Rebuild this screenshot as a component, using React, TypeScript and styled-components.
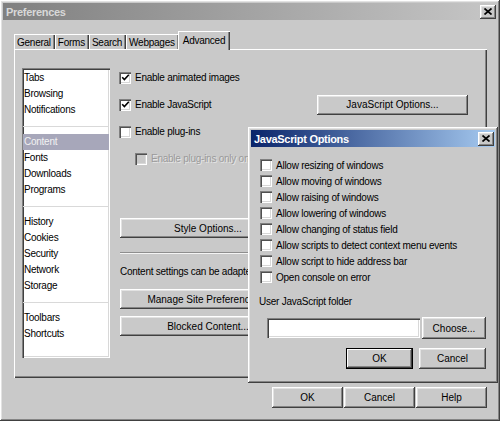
import styled, { createGlobalStyle, css } from 'styled-components'

const GlobalStyle = createGlobalStyle`
    html, body {
        margin: 0;
        padding: 0;
        background: #c9c9c9;
        overflow: hidden;
    }
    body {
        font-family: "Liberation Sans", Arial, sans-serif;
        font-size: 10px;
        letter-spacing: -0.25px;
        color: #000;
    }
    * {
        box-sizing: border-box;
    }
`

const raised = css`
    box-shadow: inset -1px -1px #404040, inset 1px 1px #ffffff,
        inset -2px -2px #858585, inset 2px 2px #e2e2e2;
`

const sunken = css`
    box-shadow: inset 1px 1px #808080, inset 2px 2px #404040,
        inset -1px -1px #ffffff, inset -2px -2px #d8d8d8;
`

const Window = styled.div`
    position: relative;
    display: flex;
    flex-direction: column;
    width: 500px;
    height: 421px;
    padding: 3px;
    background: #c9c9c9;
    ${raised}
`

const TitleBar = styled.div<{ $active?: boolean }>`
    display: flex;
    align-items: center;
    justify-content: space-between;
    height: 17px;
    padding: 0 1px 0 3px;
    background: ${(p) =>
        p.$active
            ? 'linear-gradient(to right, #0a246a, #a6caf0)'
            : 'linear-gradient(to right, #808080, #c6c6c6)'};
    color: ${(p) => (p.$active ? '#ffffff' : '#d8d8d8')};
    font-size: 11px;
    font-weight: bold;
    letter-spacing: -0.3px;
`

const CloseButton = styled.div`
    display: flex;
    align-items: center;
    justify-content: center;
    width: 16px;
    height: 14px;
    background: #c9c9c9;
    ${raised}
`

const Body = styled.div`
    display: flex;
    flex-direction: column;
    flex: 1;
    padding: 11px 10px 0 11px;
`

const TabStrip = styled.div`
    display: flex;
    align-items: flex-end;
    height: 18px;
`

const Tab = styled.div<{ $selected?: boolean }>`
    position: relative;
    display: flex;
    align-items: center;
    height: ${(p) => (p.$selected ? '19px' : '15px')};
    margin: ${(p) => (p.$selected ? '0 -1px -1px -1px' : '0')};
    padding: ${(p) => (p.$selected ? '0 5px 0 5px' : '1px 4px 0 3px')};
    background: #c9c9c9;
    z-index: ${(p) => (p.$selected ? 2 : 1)};
    box-shadow: inset 1px 1px #ffffff, inset -1px 0 #404040,
        inset -2px 0 #858585;
`

const Panel = styled.div`
    display: flex;
    gap: 9px;
    height: 329px;
    padding: 15px 19px 0 8px;
    box-shadow: inset 1px 1px #ffffff, inset -1px -1px #404040,
        inset -2px -2px #858585;
`

const ListBox = styled.div`
    width: 88px;
    height: 290px;
    margin-top: 4px;
    padding: 2px 1px;
    background: #ffffff;
    ${sunken}
`

const ListItem = styled.div<{ $selected?: boolean }>`
    height: 16px;
    line-height: 16px;
    padding-left: 1px;
    background: ${(p) => (p.$selected ? '#a7a7ba' : 'transparent')};
    color: ${(p) => (p.$selected ? '#f2f2f2' : '#000')};
`

const ListSeparator = styled.div`
    display: flex;
    align-items: center;
    height: 16px;

    &::after {
        content: '';
        flex: 1;
        height: 1px;
        background: #d9d9d9;
    }
`

const RightColumn = styled.div`
    display: flex;
    flex-direction: column;
    flex: 1;
`

const CheckRow = styled.div<{ $indent?: number; $height?: number }>`
    display: flex;
    align-items: center;
    gap: 4px;
    height: ${(p) => p.$height ?? 27}px;
    padding-left: ${(p) => p.$indent ?? 0}px;
`

const OptionRow = styled(CheckRow)`
    justify-content: space-between;
`

const CheckGroup = styled.div`
    display: flex;
    align-items: center;
    gap: 4px;
`

const Box = styled.span<{ $disabled?: boolean }>`
    display: flex;
    align-items: center;
    justify-content: center;
    width: 12px;
    height: 12px;
    flex: none;
    background: ${(p) => (p.$disabled ? '#c9c9c9' : '#ffffff')};
    box-shadow: inset 1px 1px #808080, inset 2px 2px #505050,
        inset -1px -1px #ffffff, inset -2px -2px #d8d8d8;
`

const Label = styled.span<{ $disabled?: boolean }>`
    color: ${(p) => (p.$disabled ? '#9a9a9a' : '#000')};
    text-shadow: ${(p) => (p.$disabled ? '1px 1px 0 #e6e6e6' : 'none')};
    white-space: nowrap;
`

const Button = styled.button<{ $w: number; $h?: number; $default?: boolean }>`
    display: flex;
    align-items: center;
    justify-content: center;
    flex: none;
    width: ${(p) => p.$w}px;
    height: ${(p) => p.$h ?? 21}px;
    padding: 0;
    border: none;
    background: #c9c9c9;
    font: inherit;
    color: #000;
    white-space: nowrap;
    overflow: hidden;
    ${(p) =>
        p.$default
            ? css`
                  box-shadow: inset 0 0 0 1px #000000, inset -2px -2px #404040,
                      inset 2px 2px #ffffff, inset -3px -3px #858585;
              `
            : raised}
`

const WideButton = styled(Button)<{ $top: number }>`
    margin: ${(p) => p.$top}px 0 0 1px;
`

const Etched = styled.div`
    height: 2px;
    margin: 14px 0 0 1px;
    border-top: 1px solid #8e8e8e;
    border-bottom: 1px solid #f4f4f4;
`

const InfoText = styled.div`
    height: 16px;
    line-height: 16px;
    margin: 10px 0 0 1px;
    white-space: nowrap;
`

const Footer = styled.div`
    display: flex;
    justify-content: flex-end;
    gap: 1px;
    margin-top: 9px;
`

const Dialog = styled.div`
    position: absolute;
    left: 248px;
    top: 127px;
    z-index: 5;
    display: flex;
    flex-direction: column;
    width: 250px;
    height: 256px;
    padding: 3px;
    background: #c9c9c9;
    ${raised}
`

const DialogBody = styled.div`
    display: flex;
    flex-direction: column;
    padding: 10px 9px 0 9px;
`

const FolderLabel = styled.div`
    height: 16px;
    line-height: 16px;
    margin: 9px 0 0 -1px;
`

const FolderRow = styled.div`
    display: flex;
    align-items: center;
    gap: 2px;
    margin: 7px 0 0 7px;
`

const TextInput = styled.div`
    width: 153px;
    height: 20px;
    background: #ffffff;
    ${sunken}
`

const DialogButtons = styled.div`
    display: flex;
    justify-content: flex-end;
    gap: 6px;
    margin-top: 9px;
`

const CloseIcon = () => (
    <svg width="8" height="7" viewBox="0 0 8 7">
        <path d="M0.5 0.5 L7.5 6.5 M7.5 0.5 L0.5 6.5" stroke="#000" strokeWidth="1.7" />
    </svg>
)

const CheckMark = () => (
    <svg width="9" height="9" viewBox="0 0 9 9">
        <polyline points="1.2,4.2 3.4,6.6 7.8,1.8" fill="none" stroke="#000" strokeWidth="1.6" />
    </svg>
)

const Check = ({
    label,
    checked,
    disabled,
}: {
    label: string
    checked?: boolean
    disabled?: boolean
}) => (
    <CheckGroup>
        <Box $disabled={disabled}>{checked && <CheckMark />}</Box>
        <Label $disabled={disabled}>{label}</Label>
    </CheckGroup>
)

const sections = [
    ['Tabs', 'Browsing', 'Notifications'],
    ['Content', 'Fonts', 'Downloads', 'Programs'],
    ['History', 'Cookies', 'Security', 'Network', 'Storage'],
    ['Toolbars', 'Shortcuts'],
]

const tabs = ['General', 'Forms', 'Search', 'Webpages', 'Advanced']

const jsOptions = [
    'Allow resizing of windows',
    'Allow moving of windows',
    'Allow raising of windows',
    'Allow lowering of windows',
    'Allow changing of status field',
    'Allow scripts to detect context menu events',
    'Allow script to hide address bar',
    'Open console on error',
]

const App = () => {
    return (
        <>
            <GlobalStyle />
            <Window>
                <TitleBar>
                    <span>Preferences</span>
                    <CloseButton>
                        <CloseIcon />
                    </CloseButton>
                </TitleBar>

                <Body>
                    <TabStrip>
                        {tabs.map((t) => (
                            <Tab key={t} $selected={t === 'Advanced'}>
                                {t}
                            </Tab>
                        ))}
                    </TabStrip>

                    <Panel>
                        <ListBox>
                            {sections.map((group, gi) => (
                                <div key={gi}>
                                    {gi > 0 && <ListSeparator />}
                                    {group.map((item) => (
                                        <ListItem key={item} $selected={item === 'Content'}>
                                            {item}
                                        </ListItem>
                                    ))}
                                </div>
                            ))}
                        </ListBox>

                        <RightColumn>
                            <CheckRow>
                                <Check label="Enable animated images" checked />
                            </CheckRow>
                            <OptionRow>
                                <Check label="Enable JavaScript" checked />
                                <Button $w={151} $h={20}>
                                    JavaScript Options...
                                </Button>
                            </OptionRow>
                            <CheckRow>
                                <Check label="Enable plug-ins" />
                            </CheckRow>
                            <CheckRow $indent={16}>
                                <Check label="Enable plug-ins only on demand" disabled />
                            </CheckRow>

                            <WideButton $w={176} $h={20} $top={46}>
                                Style Options...
                            </WideButton>
                            <Etched />
                            <InfoText>Content settings can be adapted for specific sites</InfoText>
                            <WideButton $w={176} $h={20} $top={9}>
                                Manage Site Preferences...
                            </WideButton>
                            <WideButton $w={176} $h={20} $top={7}>
                                Blocked Content...
                            </WideButton>
                        </RightColumn>
                    </Panel>

                    <Footer>
                        <Button $w={71}>OK</Button>
                        <Button $w={71}>Cancel</Button>
                        <Button $w={71}>Help</Button>
                    </Footer>
                </Body>

                <Dialog>
                    <TitleBar $active>
                        <span>JavaScript Options</span>
                        <CloseButton>
                            <CloseIcon />
                        </CloseButton>
                    </TitleBar>
                    <DialogBody>
                        {jsOptions.map((o) => (
                            <CheckRow key={o} $height={16}>
                                <Check label={o} />
                            </CheckRow>
                        ))}
                        <FolderLabel>User JavaScript folder</FolderLabel>
                        <FolderRow>
                            <TextInput />
                            <Button $w={64} $h={22}>
                                Choose...
                            </Button>
                        </FolderRow>
                        <DialogButtons>
                            <Button $w={67} $default>
                                OK
                            </Button>
                            <Button $w={67}>Cancel</Button>
                        </DialogButtons>
                    </DialogBody>
                </Dialog>
            </Window>
        </>
    )
}

export default App
